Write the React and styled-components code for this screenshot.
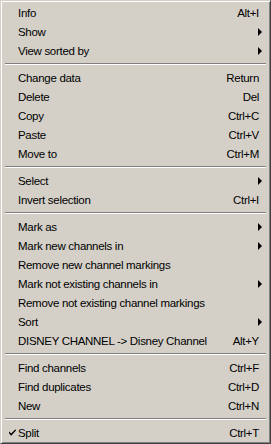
import React from 'react';
import styled, { createGlobalStyle } from 'styled-components';

const Global = createGlobalStyle`
    html, body {
        margin: 0;
        padding: 0;
        background: #d4d0c8;
    }
`;

const Menu = styled.div`
    box-sizing: border-box;
    width: 271px;
    height: 444px;
    background: #d4d0c8;
    border-top: 1px solid #d4d0c8;
    border-left: 1px solid #d4d0c8;
    border-right: 1px solid #404040;
    border-bottom: 1px solid #404040;
    box-shadow: inset 1px 1px 0 #ffffff, inset -1px -1px 0 #808080;
    padding: 2px 2px 1px 2px;
    font-family: "Liberation Sans", Arial, sans-serif;
    font-size: 11.5px;
    letter-spacing: -0.3px;
    color: #000;
    display: flex;
    flex-direction: column;
`;

const Row = styled.div`
    height: 19px;
    display: flex;
    align-items: center;
    padding: 0 9px 0 15px;
    position: relative;
    white-space: nowrap;
`;

const Label = styled.span`
    flex: 1;
`;

const Shortcut = styled.span`
    text-align: right;
`;

const Arrow = styled.span`
    width: 0;
    height: 0;
    border-top: 4px solid transparent;
    border-bottom: 4px solid transparent;
    border-left: 4px solid #000;
    margin-right: -3px;
`;

const Check = styled.svg`
    position: absolute;
    left: 6px;
    top: 6px;
`;

const Separator = styled.div`
    height: 8px;
    display: flex;
    align-items: center;
    padding: 0 2px;
    &::before {
        content: '';
        flex: 1;
        height: 0;
        border-top: 1px solid #808080;
        border-bottom: 1px solid #ffffff;
    }
`;

const items = [
    ['Info', 'Alt+I'],
    ['Show', '>'],
    ['View sorted by', '>'],
    '-',
    ['Change data', 'Return'],
    ['Delete', 'Del'],
    ['Copy', 'Ctrl+C'],
    ['Paste', 'Ctrl+V'],
    ['Move to', 'Ctrl+M'],
    '-',
    ['Select', '>'],
    ['Invert selection', 'Ctrl+I'],
    '-',
    ['Mark as', '>'],
    ['Mark new channels in', '>'],
    ['Remove new channel markings', ''],
    ['Mark not existing channels in', '>'],
    ['Remove not existing channel markings', ''],
    ['Sort', '>'],
    ['DISNEY CHANNEL -> Disney Channel', 'Alt+Y'],
    '-',
    ['Find channels', 'Ctrl+F'],
    ['Find duplicates', 'Ctrl+D'],
    ['New', 'Ctrl+N'],
    '-',
    ['Split', 'Ctrl+T', true],
];

const App = () => {
    return (
        <>
            <Global />
            <Menu>
                {items.map((item, i) => {
                    if (item === '-') return <Separator key={i} />;
                    const [label, right, checked] = item;
                    return (
                        <Row key={i}>
                            {checked && (
                                <Check width="7" height="7" viewBox="0 0 7 7">
                                    <path d="M0 2.5 L2.2 4.6 L6.4 0.2 L7 1.6 L2.2 6.8 L0 4.3 Z" fill="#000" />
                                </Check>
                            )}
                            <Label>{label}</Label>
                            {right === '>' ? <Arrow /> : <Shortcut>{right}</Shortcut>}
                        </Row>
                    );
                })}
            </Menu>
        </>
    );
};

export default App;
